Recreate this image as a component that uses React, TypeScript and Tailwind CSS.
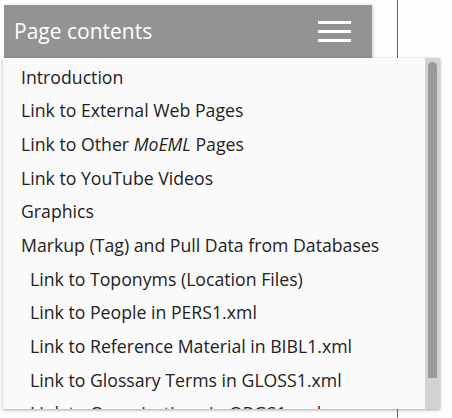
const items: { label: React.ReactNode; sub?: boolean }[] = [
  { label: 'Introduction' },
  { label: 'Link to External Web Pages' },
  { label: <>Link to Other <em>MoEML</em> Pages</> },
  { label: 'Link to YouTube Videos' },
  { label: 'Graphics' },
  { label: 'Markup (Tag) and Pull Data from Databases' },
  { label: 'Link to Toponyms (Location Files)', sub: true },
  { label: 'Link to People in PERS1.xml', sub: true },
  { label: 'Link to Reference Material in BIBL1.xml', sub: true },
  { label: 'Link to Glossary Terms in GLOSS1.xml', sub: true },
  { label: 'Link to Organizations in ORGS1.xml', sub: true },
]

export default function App() {
  return (
    <div className="relative h-[418px] w-[452px] overflow-hidden bg-[#fdfdfd]" style={{ fontFamily: '"Open Sans", sans-serif' }}>
      {/* page edge line behind the menu */}
      <div className="absolute left-[397px] top-0 h-full w-px bg-[#6b6b6b]" />

      <div className="pt-[5px] pl-[4px]">
        <div className="relative flex h-[53px] w-[368px] items-center justify-between bg-[#939393] pl-[10px] pr-[21px] shadow-[2px_0_2px_rgba(0,0,0,0.12)]">
          <span className="text-[21px] text-white">Page contents</span>
          <div className="flex w-[33px] flex-col gap-[6px]">
            <span className="h-[3px] bg-white" />
            <span className="h-[3px] bg-white" />
            <span className="h-[3px] bg-white" />
          </div>
        </div>
      </div>

      <div className="relative ml-[3px] flex h-[351px] w-[437px] bg-[#fafafa] shadow-[0_1px_3px_rgba(0,0,0,0.35)]">
        <div className="flex-1 overflow-hidden pt-[2px]">
          {items.map((it, i) => (
            <div
              key={i}
              className={`flex h-[33.7px] items-center whitespace-nowrap text-[17.7px] text-[#222] ${it.sub ? 'pl-[27px]' : 'pl-[18px]'}`}
            >
              <span>{it.label}</span>
            </div>
          ))}
        </div>
        <div className="w-[15px] bg-[#d2d2d2] px-[3px] pt-[4px]">
          <div className="h-[316px] rounded-t-full rounded-b-[3px] bg-[#9a9a9a]" />
        </div>
      </div>
    </div>
  )
}
